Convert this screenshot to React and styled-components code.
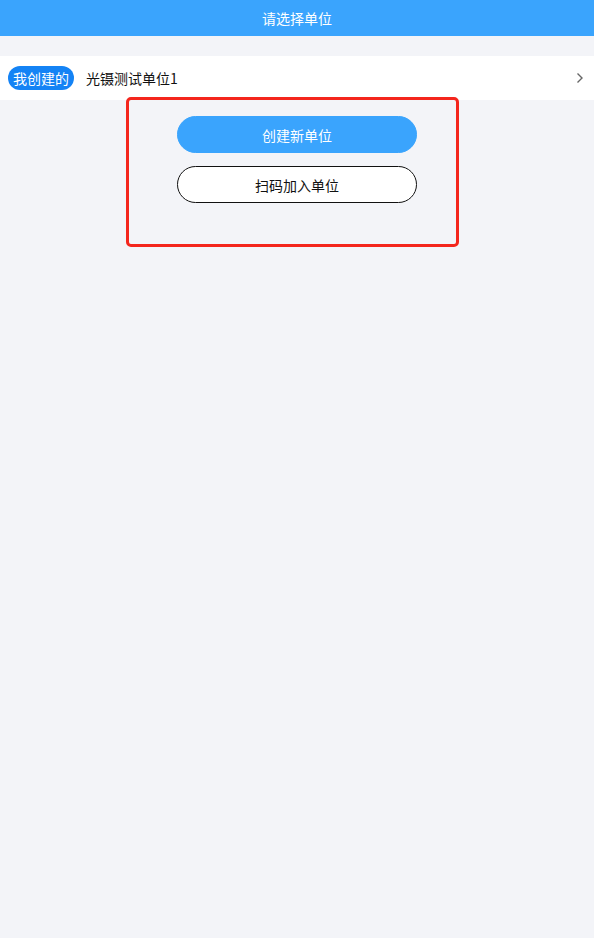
import React from "react";
import styled, { createGlobalStyle } from "styled-components";

const Global = createGlobalStyle`
  html, body { margin: 0; padding: 0; background: #f3f4f8; }
  body { font-family: "Noto Sans CJK SC", "Noto Sans", sans-serif; }
  * { box-sizing: border-box; }
`;

const Page = styled.div`
  position: relative;
  width: 594px;
  min-height: 938px;
  background: #f3f4f8;
`;

const Header = styled.header`
  height: 36px;
  background: #3aa4fd;
  color: #fff;
  font-size: 14px;
  display: flex;
  align-items: center;
  justify-content: center;
`;

const Spacer = styled.div`
  height: 20px;
`;

const Row = styled.div`
  height: 44px;
  background: #fff;
  display: flex;
  align-items: center;
  padding: 0 10px 0 8px;
`;

const Badge = styled.span`
  height: 24px;
  padding: 0 5px;
  border-radius: 12px;
  background: #1483f5;
  color: #fff;
  font-size: 14px;
  display: flex;
  align-items: center;
`;

const Name = styled.span`
  margin-left: 12px;
  font-size: 14px;
  color: #111;
  flex: 1;
`;

const Actions = styled.div`
  display: flex;
  flex-direction: column;
  align-items: center;
  gap: 13px;
  padding-top: 16px;
`;

const Pill = styled.button`
  width: 240px;
  height: 37px;
  border-radius: 19px;
  font-family: inherit;
  font-size: 14px;
  cursor: pointer;
  border: 1px solid ${(p) => (p.$primary ? "#3aa4fd" : "#111")};
  background: ${(p) => (p.$primary ? "#3aa4fd" : "#fff")};
  color: ${(p) => (p.$primary ? "#fff" : "#111")};
`;

const Highlight = styled.div`
  position: absolute;
  left: 126px;
  top: 97px;
  width: 333px;
  height: 150px;
  border: 3px solid #f4261d;
  border-radius: 5px;
  pointer-events: none;
`;

export default function App() {
  return (
    <Page>
      <Global />
      <Header>请选择单位</Header>
      <Spacer />
      <Row>
        <Badge>我创建的</Badge>
        <Name>光镊测试单位1</Name>
        <svg width="8" height="12" viewBox="0 0 8 12" fill="none">
          <path d="M1.5 1.5 L6 6 L1.5 10.5" stroke="#666" strokeWidth="1.4" />
        </svg>
      </Row>
      <Actions>
        <Pill $primary>创建新单位</Pill>
        <Pill>扫码加入单位</Pill>
      </Actions>
      <Highlight />
    </Page>
  );
}
